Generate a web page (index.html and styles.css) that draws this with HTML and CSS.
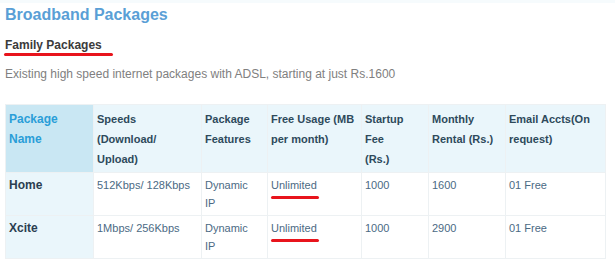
FILE: index.html
```html
<!DOCTYPE html>
<html>
<head>
<meta charset="utf-8">
<link rel="stylesheet" href="styles.css">
</head>
<body>
<div class="page">
  <h1 class="title">Broadband Packages</h1>
  <h2 class="subtitle"><span class="mark mark-wide">Family Packages</span></h2>
  <p class="intro">Existing high speed internet packages with ADSL, starting at just Rs.1600</p>
  <table class="packages">
    <colgroup>
      <col class="c1"><col class="c2"><col class="c3"><col class="c4"><col class="c5"><col class="c6"><col class="c7">
    </colgroup>
    <thead>
      <tr>
        <th class="first">Package Name</th>
        <th class="narrow">Speeds (Download/ Upload)</th>
        <th class="narrow">Package Features</th>
        <th>Free Usage (MB per month)</th>
        <th class="narrower">Startup Fee (Rs.)</th>
        <th>Monthly Rental (Rs.)</th>
        <th>Email Accts(On request)</th>
      </tr>
    </thead>
    <tbody>
      <tr>
        <td class="name">Home</td>
        <td>512Kbps/ 128Kbps</td>
        <td class="narrow">Dynamic IP</td>
        <td><span class="mark">Unlimited</span></td>
        <td class="narrower">1000</td>
        <td>1600</td>
        <td>01 Free</td>
      </tr>
      <tr>
        <td class="name">Xcite</td>
        <td>1Mbps/ 256Kbps</td>
        <td class="narrow">Dynamic IP</td>
        <td><span class="mark">Unlimited</span></td>
        <td class="narrower">1000</td>
        <td>2900</td>
        <td>01 Free</td>
      </tr>
    </tbody>
  </table>
</div>
</body>
</html>
```
FILE: styles.css
```css
html, body {
  margin: 0;
  padding: 0;
  background: #ffffff;
}
body {
  font-family: "Liberation Sans", Arial, sans-serif;
  border-top: 3px solid #f6fbfd;
}
.page {
  padding: 2px 5px 0 5px;
}
.title {
  margin: 0;
  font-size: 16px;
  line-height: 20px;
  font-weight: bold;
  color: #5a9fd6;
}
.subtitle {
  margin: 12px 0 0 0;
  font-size: 12px;
  line-height: 16px;
  font-weight: bold;
  color: #3b3b3b;
}
.mark {
  position: relative;
  display: inline-block;
}
.mark::after {
  content: "";
  position: absolute;
  left: 0;
  right: -2px;
  bottom: -4px;
  height: 3px;
  border-radius: 2px;
  background: #e8141c;
}
.mark-wide::after {
  left: -1px;
  right: -11px;
  bottom: -3px;
}
.intro {
  margin: 13px 0 0 0;
  font-size: 12px;
  line-height: 16px;
  color: #808080;
}
.packages {
  margin-top: 22px;
  width: 600px;
  table-layout: fixed;
  border-collapse: collapse;
  border: 1px solid #e9edf0;
}
.c1 { width: 88px; }
.c2 { width: 108px; }
.c3 { width: 66px; }
.c4 { width: 94px; }
.c5 { width: 67px; }
.c6 { width: 77px; }
.c7 { width: 100px; }
.packages th, .packages td {
  border: 1px solid #edf1f3;
  text-align: left;
  vertical-align: top;
  padding: 4px 2px 3px 3px;
}
.packages .narrow {
  padding-right: 14px;
}
.packages .narrower {
  padding-right: 18px;
}
.packages th {
  font-size: 11px;
  line-height: 20px;
  font-weight: bold;
  color: #2e4a5b;
  background: #eaf6fb;
}
.packages th.first {
  background: #c9e7f3;
  color: #2a9ed8;
  font-size: 12px;
}
.packages td {
  font-size: 11px;
  line-height: 17.6px;
  color: #4b6a84;
}
.packages td.name {
  background: #eaf6fb;
  font-weight: bold;
  color: #2b3e50;
  font-size: 12px;
}
```
